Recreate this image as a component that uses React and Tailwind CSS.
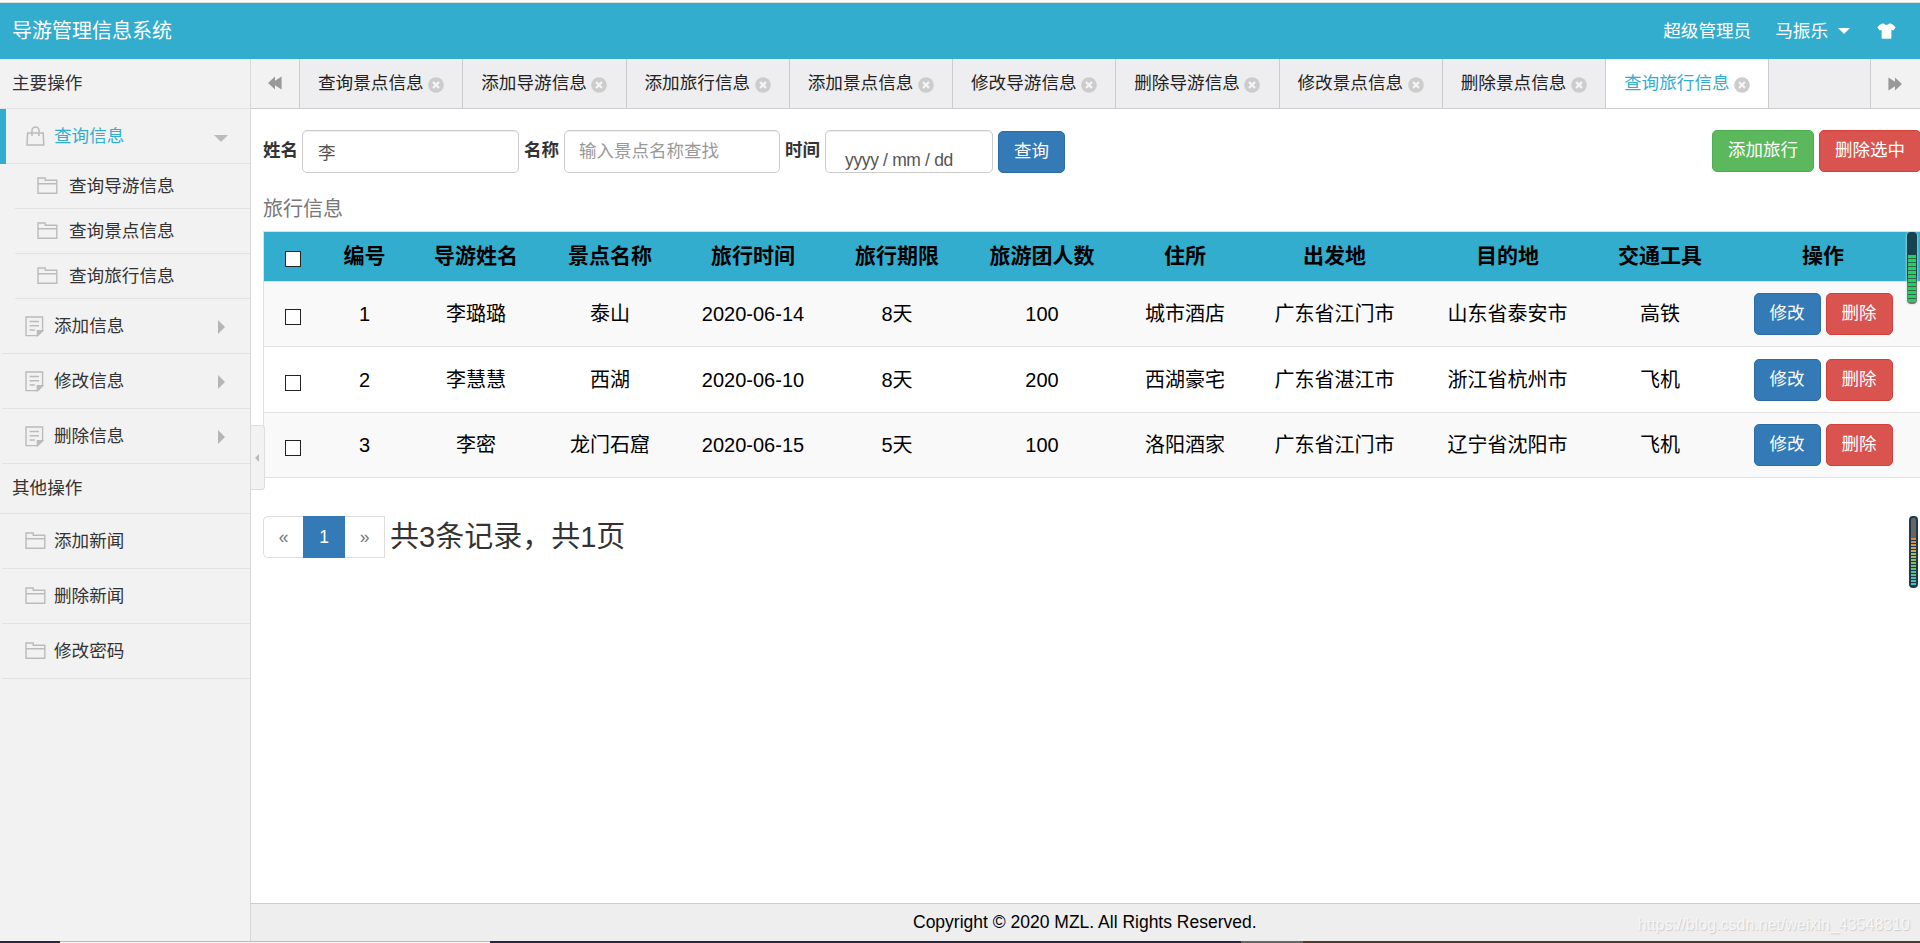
const TABS = [
  '查询景点信息',
  '添加导游信息',
  '添加旅行信息',
  '添加景点信息',
  '修改导游信息',
  '删除导游信息',
  '修改景点信息',
  '删除景点信息',
  '查询旅行信息',
]

const COLUMNS = [
  { label: '编号', width: 'w-[85px]' },
  { label: '导游姓名', width: 'w-[138px]' },
  { label: '景点名称', width: 'w-[130px]' },
  { label: '旅行时间', width: 'w-[156px]' },
  { label: '旅行期限', width: 'w-[132px]' },
  { label: '旅游团人数', width: 'w-[158px]' },
  { label: '住所', width: 'w-[128px]' },
  { label: '出发地', width: 'w-[171px]' },
  { label: '目的地', width: 'w-[175px]' },
  { label: '交通工具', width: 'w-[130px]' },
  { label: '操作', width: 'w-[196px]' },
]

const TRIPS = [
  ['1', '李璐璐', '泰山', '2020-06-14', '8天', '100', '城市酒店', '广东省江门市', '山东省泰安市', '高铁'],
  ['2', '李慧慧', '西湖', '2020-06-10', '8天', '200', '西湖豪宅', '广东省湛江市', '浙江省杭州市', '飞机'],
  ['3', '李密', '龙门石窟', '2020-06-15', '5天', '100', '洛阳酒家', '广东省江门市', '辽宁省沈阳市', '飞机'],
]

// ─── Icons ───────────────────────────────────────────────────────────────────
function FolderIcon() {
  return (
    <svg width="21" height="18" viewBox="0 0 21 18" fill="none" stroke="#bbb" strokeWidth="1.4" aria-hidden="true">
      <path d="M1 16.3V1h7.2v2.2h11.6v13.1z M1 6.8h18.8" />
    </svg>
  )
}

function BagIcon() {
  return (
    <svg width="19" height="20" viewBox="0 0 19 20" fill="none" stroke="#bbb" strokeWidth="1.5" aria-hidden="true">
      <path d="M1.6 7h15.6l.6 12H1z M6 10V4.4a3.5 3.5 0 0 1 7 0V10" />
    </svg>
  )
}

function NoteIcon() {
  return (
    <svg width="19" height="21" viewBox="0 0 19 21" fill="none" stroke="#bbb" strokeWidth="1.4" aria-hidden="true">
      <path d="M1 1h16.6v13.6l-5 5H1z M4.6 5.5h9.4 M4.6 9.7h9.4 M4.6 14h5.2" />
      <path d="M12.4 19.6v-5h5.2z" fill="#bbb" />
    </svg>
  )
}

function CloseIcon() {
  return (
    <svg width="16" height="16" viewBox="0 0 16 16" aria-hidden="true">
      <circle cx="8" cy="8" r="7.8" fill="#ccc" />
      <path d="M5 5l6 6M11 5l-6 6" stroke="#f5f5f5" strokeWidth="2.2" />
    </svg>
  )
}

function ShirtIcon() {
  return (
    <svg width="19" height="16" viewBox="0 0 19 16" fill="#fff" aria-hidden="true">
      <path d="M5.6.4h1.2c1 1.7 4.4 1.7 5.4 0h1.2c1.8.4 3.6 1.6 5.2 4.2l-2.4 3-1.8-.9v8.1c0 .6-.3.9-.9.9h-8c-.6 0-.9-.3-.9-.9V6.7l-1.8.9-2.4-3C2 2 3.8.8 5.6.4z" />
    </svg>
  )
}

function Rewind({ flip }) {
  return (
    <svg width="14" height="14" viewBox="0 0 14 14" fill="#999" className={flip ? '-scale-x-100' : ''} aria-hidden="true">
      <path d="M0 7l7-6.6v4.4l6.6-4.4v13.2L7 9.2v4.4z" />
    </svg>
  )
}

// ─── Sidebar ─────────────────────────────────────────────────────────────────
function SideTitle({ children }) {
  return (
    <div className="h-[50px] border-b border-[#e2e2e2] pl-3 leading-[48px]">{children}</div>
  )
}

function SideItem({ icon, label, arrow, active }) {
  return (
    <div className={`flex h-[55px] items-stretch ${active ? 'text-[#32adce]' : ''}`}>
      <span className={active ? 'w-1.5 bg-[#32adce]' : 'w-0.5'} />
      <div className={`flex flex-1 items-center border-b border-[#e2e2e2] ${active ? 'pl-5' : 'pl-[23px]'}`}>
        <span className={`flex ${active ? 'w-7' : 'w-[29px]'}`}>{icon}</span>
        <span className="flex-1">{label}</span>
        {arrow === 'down' && (
          <span className="mt-1 mr-[22px] border-x-[7px] border-t-[7px] border-x-transparent border-t-[#bbb]" />
        )}
        {arrow === 'right' && (
          <span className="mt-0.5 mr-[25px] border-y-[7px] border-l-[7px] border-y-transparent border-l-[#b5b5b5]" />
        )}
      </div>
    </div>
  )
}

function SubItem({ label }) {
  return (
    <div className="ml-[15px] flex h-[45px] items-center border-b border-[#e2e2e2] pl-[22px]">
      <span className="flex w-8"><FolderIcon /></span>
      <span>{label}</span>
    </div>
  )
}

function Sidebar() {
  return (
    <aside className="w-[251px] shrink-0 border-r border-[#d8d8d8] bg-[#f2f2f2] text-[17.6px] text-[#333]">
      <SideTitle>主要操作</SideTitle>
      <SideItem icon={<BagIcon />} label="查询信息" arrow="down" active />
      <SubItem label="查询导游信息" />
      <SubItem label="查询景点信息" />
      <SubItem label="查询旅行信息" />
      <SideItem icon={<NoteIcon />} label="添加信息" arrow="right" />
      <SideItem icon={<NoteIcon />} label="修改信息" arrow="right" />
      <SideItem icon={<NoteIcon />} label="删除信息" arrow="right" />
      <SideTitle>其他操作</SideTitle>
      <SideItem icon={<FolderIcon />} label="添加新闻" />
      <SideItem icon={<FolderIcon />} label="删除新闻" />
      <SideItem icon={<FolderIcon />} label="修改密码" />
    </aside>
  )
}

// ─── Tab bar ─────────────────────────────────────────────────────────────────
function TabBar() {
  return (
    <nav className="flex h-[50px] border-b border-[#ccc] bg-[#eeeef0] text-[17.6px] text-[#222]">
      <button className="flex w-12 items-center justify-center bg-[#f2f2f2] pb-0.5"><Rewind /></button>
      <div className="flex flex-1 border-l border-[#ccc]">
        {TABS.map((tab, i) => (
          <div
            key={tab}
            className={`flex w-[163.25px] items-center border-r border-[#ccc] pl-[18px] ${i === TABS.length - 1 ? 'bg-white text-[#32adce]' : ''}`}
          >
            <span className="w-[110px] whitespace-nowrap">{tab}</span>
            <span className="mt-[3px]"><CloseIcon /></span>
          </div>
        ))}
      </div>
      <button className="flex w-[50px] items-center justify-center border-l border-[#ccc] bg-[#f2f2f2] pr-0.5"><Rewind flip /></button>
    </nav>
  )
}

// ─── Search form ─────────────────────────────────────────────────────────────
const BUTTON_COLORS = {
  primary: 'bg-[#337ab7] border-[#2e6da4]',
  success: 'bg-[#5cb85c] border-[#4cae4c]',
  danger: 'bg-[#d9534f] border-[#d43f3a]',
}

function Btn({ color, wide, children }) {
  return (
    <button
      className={`h-[42px] shrink-0 rounded-[5px] border text-[17.5px] leading-none text-white ${wide ? 'w-[102px]' : 'w-[67px]'} ${BUTTON_COLORS[color]}`}
    >
      {children}
    </button>
  )
}

const INPUT = 'h-[43px] rounded-[5px] border border-[#ccc] bg-white text-[17.5px] text-[#555] shadow-[inset_0_1px_1px_rgba(0,0,0,0.075)]'

function SearchForm() {
  return (
    <form className="flex h-[43px] items-start text-[17.5px] text-[#333]">
      <label className="w-[39px] pt-[7px] font-bold">姓名</label>
      <input className={`${INPUT} w-[217px] px-[15px]`} defaultValue="李" />
      <label className="ml-[5px] w-10 pt-[7px] font-bold">名称</label>
      <input className={`${INPUT} w-[216px] px-3.5 placeholder:text-[#999]`} placeholder="输入景点名称查找" />
      <label className="ml-[5px] w-10 pt-[7px] font-bold">时间</label>
      <div className={`${INPUT} mr-[5px] w-[168px] pt-4 pl-[19px] tracking-[-0.35px]`}>yyyy / mm / dd</div>
      <div className="mt-px flex"><Btn color="primary">查询</Btn></div>
      <div className="-mr-px ml-auto flex gap-[5px]">
        <Btn color="success" wide>添加旅行</Btn>
        <Btn color="danger" wide>删除选中</Btn>
      </div>
    </form>
  )
}

// ─── Trip table ──────────────────────────────────────────────────────────────
function Check() {
  return <span className="mx-auto block size-4 border border-[#222] bg-white" />
}

function TripTable() {
  return (
    <table className="w-[1658px] table-fixed border-separate border-spacing-0 border-t border-l border-[#e0e0e0] text-center text-xl text-black">
      <thead>
        <tr className="h-[50px] bg-[#32adce] text-[21px]">
          <th className="w-[58px] border-b border-[#ddd] pt-1"><Check /></th>
          {COLUMNS.map(({ label, width }) => (
            <th key={label} className={`${width} border-b border-[#ddd] pb-0.5 leading-none font-bold`}>{label}</th>
          ))}
        </tr>
      </thead>
      <tbody>
        {TRIPS.map((trip) => (
          <tr key={trip[0]} className="h-[65.4px] odd:bg-[#f9f9f9]">
            <td className="border-b border-[#e2e2e2] pt-1.5"><Check /></td>
            {trip.map((cell, i) => (
              <td key={i} className="border-b border-[#e2e2e2] leading-none whitespace-nowrap">{cell}</td>
            ))}
            <td className="border-b border-[#e2e2e2]">
              <div className="flex justify-center gap-[5px]">
                <Btn color="primary">修改</Btn>
                <Btn color="danger">删除</Btn>
              </div>
            </td>
          </tr>
        ))}
      </tbody>
    </table>
  )
}

function Pagination() {
  return (
    <div className="flex h-[42px] items-center text-[17.5px]">
      <span className="flex h-full w-10 items-center justify-center rounded-l-[5px] border border-r-0 border-[#ddd] text-[#777]">«</span>
      <span className="flex h-full w-[42px] items-center justify-center bg-[#337ab7] text-white">1</span>
      <span className="flex h-full w-10 items-center justify-center border border-l-0 border-[#ddd] text-[#777]">»</span>
      <span className="ml-[5px] text-[29px] leading-none text-[#333]">共3条记录，共1页</span>
    </div>
  )
}

// ─── Level meters on the right edge ──────────────────────────────────────────
function Meters() {
  return (
    <>
      <div className="absolute top-[232px] right-[3px] h-[72px] w-[10px] rounded-[4px] bg-[linear-gradient(#17434f_60%,#777_75%)] px-px pt-[23px] pb-0.5 shadow-[0_0_2px_1px_rgba(200,220,225,0.6)]">
        <div className="h-full bg-[repeating-linear-gradient(#25d05c_0_3px,#2b6a48_3px_4px)]" />
      </div>
      <div className="absolute top-[516px] right-[2px] h-[72px] w-[9px] rounded-[4px] border-2 border-[#1e3a4c] bg-[#666] pt-5">
        <div className="h-full bg-[repeating-linear-gradient(transparent_0_2px,#1e3a4c_2px_3px),linear-gradient(#d98340,#c5b545_30%,#6fbe6a_60%,#35c5bd)]" />
      </div>
    </>
  )
}

export default function App() {
  return (
    <div className="relative flex h-[943px] w-[1920px] flex-col overflow-hidden bg-white font-['Liberation_Sans','Noto_Sans_CJK_SC',sans-serif]">
      <div className="h-[3px] border-b border-[#ddd] bg-[#fafafa]" />
      <header className="flex h-14 shrink-0 items-center bg-[#32adce] pr-6 pl-3 text-[17.6px] text-white">
        <h1 className="flex-1 text-xl">导游管理信息系统</h1>
        <span className="mr-6">超级管理员</span>
        <span>马振乐</span>
        <span className="mr-[27px] ml-[10px] border-x-[6px] border-t-[6px] border-x-transparent border-t-white" />
        <ShirtIcon />
      </header>

      <div className="flex min-h-0 flex-1">
        <Sidebar />
        <div className="flex min-w-0 flex-1 flex-col">
          <TabBar />
          <main className="flex-1 pt-[21px] pl-3">
            <SearchForm />
            <div className="mt-[21px] mb-[7px] h-[30px] text-xl leading-[31px] text-[#777]">旅行信息</div>
            <TripTable />
            <div className="mt-[38px]"><Pagination /></div>
          </main>
          <footer className="flex h-[38px] items-center border-t border-[#ccc] bg-[#eee] text-[17.5px] text-black">
            <span className="ml-[662px] flex-1">Copyright © 2020 MZL. All Rights Reserved.</span>
            <span className="mr-2.5 pt-1 text-base text-[#f6f6f6] [text-shadow:1px_1px_1px_#ccc]">https://blog.csdn.net/weixin_43548310</span>
          </footer>
        </div>
      </div>

      <div className="flex h-0.5 shrink-0 bg-[#2a2640]">
        <span className="ml-[60px] w-[430px] border-t border-[#bbb] bg-[#f5f5f5]" />
        <span className="ml-[751px] w-[62px] bg-[#666]" />
        <span className="flex-1 bg-[#4a3a30]" />
      </div>

      {/* sidebar collapse handle */}
      <div className="absolute top-[425px] left-[251px] flex h-[65px] w-3.5 items-center rounded-r-[4px] border border-l-0 border-[#ddd] bg-[#f2f2f2] pl-1">
        <span className="border-y-4 border-r-4 border-y-transparent border-r-[#bbb]" />
      </div>
      <Meters />
    </div>
  )
}
